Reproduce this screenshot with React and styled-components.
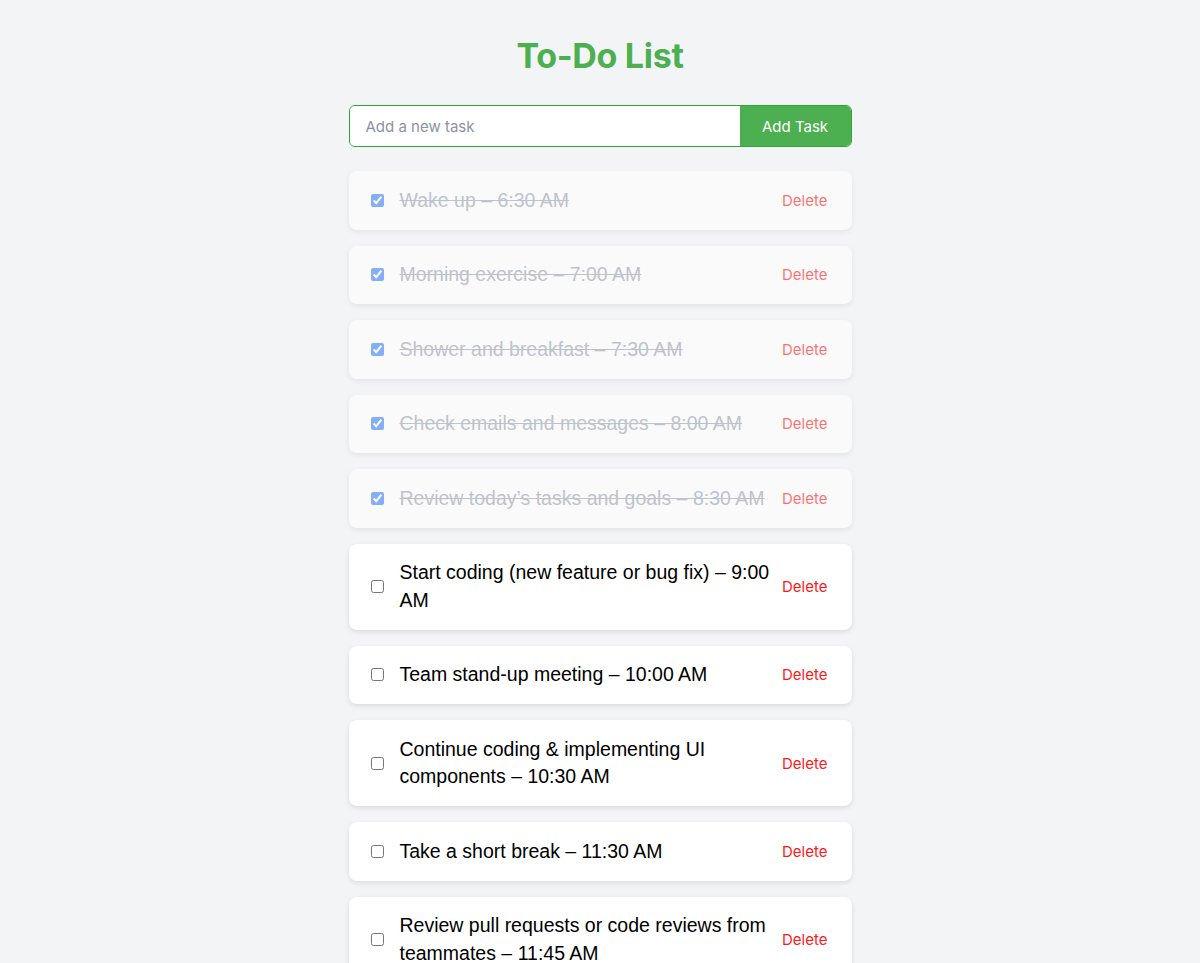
import React, { useState } from "react";
import styled, { createGlobalStyle } from "styled-components";

const GlobalStyle = createGlobalStyle`
  body {
    margin: 0;
    background: #f3f4f6;
    font-family: "Liberation Sans", Arial, sans-serif;
  }
`;

const Page = styled.div`
  width: 503px;
  margin: 0 auto;
  padding-top: 35px;
`;

const Title = styled.h1`
  margin: 0 0 29px;
  text-align: center;
  font-family: Inter, "Noto Sans", sans-serif;
  font-size: 34px;
  line-height: 41px;
  font-weight: 700;
  letter-spacing: -0.3px;
  color: #4caf50;
`;

const AddForm = styled.form`
  display: flex;
  height: 42px;
  border: 1px solid #2ea836;
  border-radius: 6px;
  overflow: hidden;
  box-sizing: border-box;
  margin-bottom: 24px;
`;

const TaskInput = styled.input`
  flex: 1;
  border: none;
  outline: none;
  padding: 0 16px;
  font-family: Inter, "Noto Sans", sans-serif;
  font-size: 15px;
  color: #111;
  background: #fff;
  &::placeholder {
    color: #8b93a1;
  }
`;

const AddButton = styled.button`
  width: 111px;
  border: none;
  background: #4caf50;
  color: #fff;
  font-family: Inter, "Noto Sans", sans-serif;
  font-size: 15px;
  cursor: pointer;
`;

const List = styled.ul`
  list-style: none;
  margin: 0;
  padding: 0;
  display: flex;
  flex-direction: column;
  gap: 16px;
`;

const Item = styled.li`
  display: flex;
  align-items: center;
  padding: 15.5px 20px 15.5px 18px;
  background: #fff;
  border-radius: 8px;
  box-shadow: 0 2px 5px rgba(0, 0, 0, 0.1);
  opacity: ${p => (p.done ? 0.6 : 1)};
`;

const Check = styled.input`
  margin: 3px 16px 3px 4px;
  width: 13px;
  height: 13px;
  flex-shrink: 0;
  accent-color: #3b82f6;
`;

const Text = styled.span`
  flex: 1;
  margin-right: 8px;
  font-size: 19.5px;
  line-height: 27.5px;
  color: ${p => (p.done ? "#9ca3af" : "#000")};
  text-decoration: ${p => (p.done ? "line-through" : "none")};
`;

const DeleteButton = styled.button`
  border: none;
  background: none;
  padding: 4px;
  color: #ff1a1a;
  font-family: Inter, "Noto Sans", sans-serif;
  font-size: 15px;
  cursor: pointer;
`;

const initialTasks = [
  { text: "Wake up – 6:30 AM", done: true },
  { text: "Morning exercise – 7:00 AM", done: true },
  { text: "Shower and breakfast – 7:30 AM", done: true },
  { text: "Check emails and messages – 8:00 AM", done: true },
  { text: "Review today’s tasks and goals – 8:30 AM", done: true },
  { text: "Start coding (new feature or bug fix) – 9:00 AM", done: false },
  { text: "Team stand-up meeting – 10:00 AM", done: false },
  { text: "Continue coding & implementing UI components – 10:30 AM", done: false },
  { text: "Take a short break – 11:30 AM", done: false },
  { text: "Review pull requests or code reviews from teammates – 11:45 AM", done: false },
  { text: "Lunch break – 12:30 PM", done: false },
];

export default function App() {
  const [tasks, setTasks] = useState(initialTasks);
  const [draft, setDraft] = useState("");

  const addTask = e => {
    e.preventDefault();
    if (!draft.trim()) return;
    setTasks([...tasks, { text: draft.trim(), done: false }]);
    setDraft("");
  };

  const toggle = i =>
    setTasks(tasks.map((t, j) => (j === i ? { ...t, done: !t.done } : t)));

  const remove = i => setTasks(tasks.filter((_, j) => j !== i));

  return (
    <>
      <GlobalStyle />
      <Page>
        <Title>To-Do List</Title>
        <AddForm onSubmit={addTask}>
          <TaskInput
            placeholder="Add a new task"
            value={draft}
            onChange={e => setDraft(e.target.value)}
          />
          <AddButton type="submit">Add Task</AddButton>
        </AddForm>
        <List>
          {tasks.map((task, i) => (
            <Item key={i} done={task.done}>
              <Check type="checkbox" checked={task.done} onChange={() => toggle(i)} />
              <Text done={task.done}>{task.text}</Text>
              <DeleteButton onClick={() => remove(i)}>Delete</DeleteButton>
            </Item>
          ))}
        </List>
      </Page>
    </>
  );
}
